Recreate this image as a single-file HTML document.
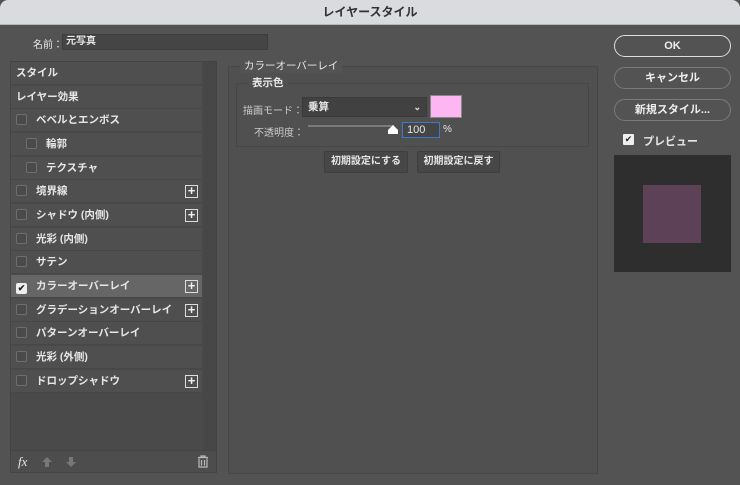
<!DOCTYPE html><html><head><meta charset="utf-8"><style>
*{box-sizing:border-box;margin:0;padding:0}
body{width:740px;height:485px;background:#535353;font-family:"Liberation Sans","Noto Sans CJK JP",sans-serif;font-size:11px;color:#e6e6e6;position:relative;overflow:hidden}
.a{position:absolute}
.title{left:0;top:0;width:740px;height:25px;background:#d9dbde;border-bottom:1px solid #b8b8b8;color:#333;font-weight:bold;font-size:12px;text-align:center;line-height:25px;border-radius:8px 8px 0 0}
.row{position:absolute;left:11px;width:191px;height:23px;background:#4f4f4f;border-bottom:1px solid #474747;line-height:23px;font-weight:bold;font-size:10.5px;padding-left:5px}
.cb{display:inline-block;width:11px;height:11px;border:1px solid #6e6e6e;background:#4a4a4a;vertical-align:-2px;margin-right:9px;border-radius:2px}
.plus{position:absolute;right:4px;top:5px;width:13px;height:13px;border:1px solid #ddd;color:#eee;font-size:13px;line-height:10px;text-align:center;font-weight:bold}
.btn{position:absolute;border:1px solid #7a7a7a;border-radius:11px;height:22px;text-align:center;line-height:20px;font-weight:bold;font-size:11px;color:#eee}
.b2{position:absolute;background:#474747;border:1px solid #3e3e3e;border-radius:2px;height:22px;text-align:center;line-height:20px;font-size:10px;font-weight:bold}
</style></head><body>
<div class="a title">レイヤースタイル</div>
<div class="a" style="left:33px;top:36px;font-size:10px">名前：</div>
<div class="a" style="left:62px;top:34px;width:206px;height:16px;background:#454545;border:1px solid #3d3d3d;font-size:10px;font-weight:bold;padding-left:3px;line-height:14px">元写真</div>
<div class="a" style="left:10px;top:61px;width:207px;height:412px;background:#4a4a4a;border:1px solid #444"></div>
<div class="a" style="left:203px;top:62px;width:13px;height:388px;background:#474747"></div>
<div class="row" style="top:62px">スタイル</div>
<div class="row" style="top:86px">レイヤー効果</div>
<div class="row" style="top:109px"><span class="cb"></span>ベベルとエンボス</div>
<div class="row" style="top:133px;padding-left:15px"><span class="cb"></span>輪郭</div>
<div class="row" style="top:157px;padding-left:15px"><span class="cb"></span>テクスチャ</div>
<div class="row" style="top:180px"><span class="cb"></span>境界線<span class="plus">+</span></div>
<div class="row" style="top:204px"><span class="cb"></span>シャドウ (内側)<span class="plus">+</span></div>
<div class="row" style="top:228px"><span class="cb"></span>光彩 (内側)</div>
<div class="row" style="top:251px"><span class="cb"></span>サテン</div>
<div class="row" style="top:275px;background:#666"><span class="cb" style="background:#eee;border-color:#eee;color:#222;font-size:9px;line-height:9px;text-align:center">✔</span>カラーオーバーレイ<span class="plus">+</span></div>
<div class="row" style="top:299px"><span class="cb"></span>グラデーションオーバーレイ<span class="plus">+</span></div>
<div class="row" style="top:322px"><span class="cb"></span>パターンオーバーレイ</div>
<div class="row" style="top:346px"><span class="cb"></span>光彩 (外側)</div>
<div class="row" style="top:370px"><span class="cb"></span>ドロップシャドウ<span class="plus">+</span></div>
<div class="a" style="left:11px;top:450px;width:205px;height:22px;background:#4d4d4d;border-top:1px solid #444"></div>
<div class="a" style="left:18px;top:454px;font-style:italic;font-family:'Liberation Serif',serif;font-size:13px">fx</div>
<svg class="a" style="left:41px;top:456px" width="12" height="12"><path d="M6 1L1 6H4V11H8V6H11Z" fill="#777"/></svg>
<svg class="a" style="left:65px;top:456px" width="12" height="12"><path d="M6 11L1 6H4V1H8V6H11Z" fill="#777"/></svg>
<svg class="a" style="left:197px;top:455px" width="12" height="13"><path d="M1 2.5H11M4 2.5V1H8V2.5M2 3.5V12H10V3.5M4.5 5V10.5M7.5 5V10.5" stroke="#bbb" stroke-width="1.2" fill="none"/></svg>
<div class="a" style="left:228px;top:66px;width:370px;height:408px;border:1px solid #474747;background:#505050"></div>
<div class="a" style="left:240px;top:58px;background:#535353;padding:0 4px;font-size:10.5px">カラーオーバーレイ</div>
<div class="a" style="left:236px;top:83px;width:353px;height:64px;border:1px solid #474747"></div>
<div class="a" style="left:248px;top:75px;background:#505050;padding:0 4px;font-size:10.5px;font-weight:bold">表示色</div>
<div class="a" style="left:243px;top:102px;font-size:10px;color:#ccc">描画モード：</div>
<div class="a" style="left:302px;top:97px;width:125px;height:20px;background:#414141;border:1px solid #3a3a3a;font-weight:bold;font-size:10.5px;line-height:18px;padding-left:5px">乗算<span style="position:absolute;right:5px;font-size:9px">⌄</span></div>
<div class="a" style="left:430px;top:95px;width:32px;height:23px;background:#feb6f3;border:1px solid #888"></div>
<div class="a" style="left:254px;top:124px;font-size:10px;color:#ccc">不透明度：</div>
<div class="a" style="left:308px;top:125px;width:86px;height:2px;background:#7a7a7a"></div>
<svg class="a" style="left:387px;top:124px" width="12" height="11"><path d="M6 1L11 6V10H1V6Z" fill="#fff"/></svg>
<div class="a" style="left:402px;top:122px;width:38px;height:16px;border:1px solid #3d79c9;background:#454545;font-size:11px;line-height:14px;padding-left:4px">100</div>
<div class="a" style="left:443px;top:124px;font-size:10px">%</div>
<div class="b2" style="left:324px;top:151px;width:84px">初期設定にする</div>
<div class="b2" style="left:417px;top:151px;width:83px">初期設定に戻す</div>
<div class="btn" style="left:614px;top:35px;width:117px;border-color:#ddd">OK</div>
<div class="btn" style="left:614px;top:67px;width:117px">キャンセル</div>
<div class="btn" style="left:614px;top:99px;width:117px">新規スタイル...</div>
<div class="a" style="left:623px;top:134px;width:11px;height:11px;background:#eee;color:#222;font-size:9px;line-height:11px;text-align:center;border-radius:1px">✔</div>
<div class="a" style="left:643px;top:133px;font-weight:bold;font-size:11px">プレビュー</div>
<div class="a" style="left:614px;top:155px;width:117px;height:117px;background:#2e2e2e"></div>
<div class="a" style="left:643px;top:185px;width:58px;height:58px;background:#5d4257"></div>
</body></html>
